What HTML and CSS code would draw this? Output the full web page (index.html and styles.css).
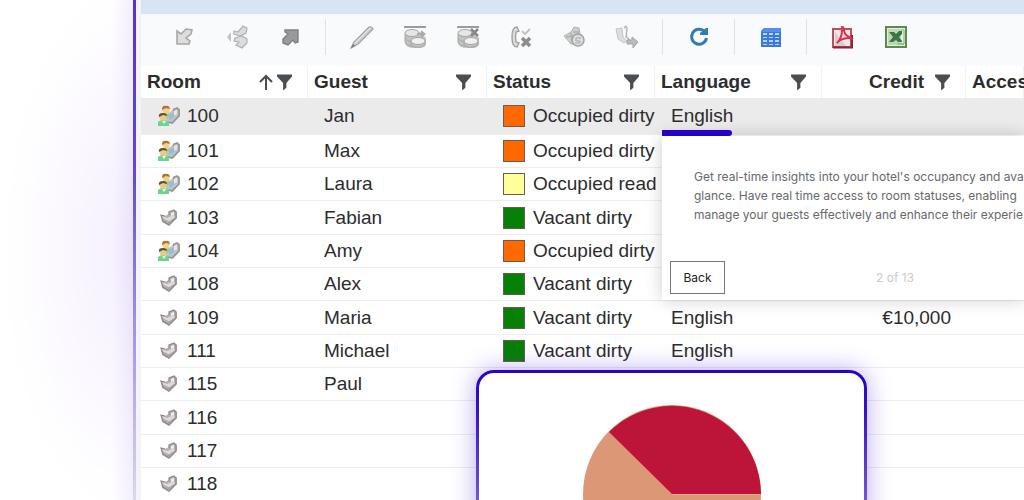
FILE: index.html
```html
<!DOCTYPE html>
<html lang="en">
<head>
<meta charset="utf-8">
<title>Rooms</title>
<link rel="stylesheet" href="styles.css">
</head>
<body>
<svg class="defs" width="0" height="0" aria-hidden="true">
  <defs>
    <symbol id="funnel" viewBox="0 0 16 17"><path d="M0 0H16V2L10 9V14L6.500 17V9L0 2Z" fill="#4a4e53"/></symbol>
    <symbol id="bed" viewBox="0 0 18 18">
      <path d="M1 6L5 7L9 5V3L14 1L17 3V9L9 17L2 13Z" fill="#b5b0b0"/>
      <path d="M2 7L7 9L14 6L15 9L9 13L3 11Z" fill="#dedada"/>
      <path d="M9 6V3L14 1L16 3V9L9 16L3 12L1 6L5 7" fill="none" stroke="#8d8787" stroke-width="1.200"/>
      <path d="M11 4L14 3V6L11 7Z" fill="#f3eeec"/>
      <path d="M3 10L9 13L15 9M9 13V16" fill="none" stroke="#a39d9d"/>
    </symbol>
    <symbol id="guests" viewBox="0 0 24 22">
      <path d="M9 9L15 6L17 4L20 2L23 4V11L16 19L9 17Z" fill="#b8c5cc"/>
      <path d="M16 6L17 4L20 3L22 5V11L15 18L11 17" fill="none" stroke="#9b8f8a" stroke-width="1.500"/>
      <path d="M11 10L18 7L19 10L13 15Z" fill="#9dbbcc"/>
      <path d="M17 6L20 5V9L17 11Z" fill="#efe5dd"/>
      <path d="M5 10Q8 6 12 10L10 13H5Z" fill="#7ed69b"/>
      <circle cx="9" cy="5" r="3.500" fill="#f5cf83"/><path d="M5 5Q5 0 9 1Q12 0 13 4L9 3Z" fill="#b27238"/>
      <path d="M1 21V17Q5 13 12 17V21Z" fill="#69d58e"/><path d="M5 16L7 19L9 16Z" fill="#fff"/>
      <circle cx="6" cy="12" r="3.500" fill="#f2c978"/><path d="M2 12Q1 8 6 8Q10 8 10 11L6 10Z" fill="#5d5040"/>
    </symbol>
    <symbol id="coins" viewBox="0 0 24 24">
      <path d="M1 1H23V3H1Z" fill="#9c9c9c"/>
      <path d="M2 8V18Q3 23 11 23H18Q23 22 23 18V13L17 7Z" fill="#c2c2c2"/>
      <ellipse cx="9" cy="8" rx="7" ry="3.500" fill="#e6e6e6" stroke="#a5a5a5"/>
      <path d="M2 9V17Q3 21 9 21M2 13Q4 17 9 16" fill="none" stroke="#a8a8a8"/>
      <ellipse cx="15" cy="16" rx="7" ry="3.500" fill="#f0f0f0" stroke="#a5a5a5"/>
      <path d="M8 17V20Q14 25 22 20V17" fill="none" stroke="#a5a5a5"/>
    </symbol>
  </defs>
</svg>
<main class="page">
  <section class="window">
    <div class="titlebar"></div>
    <div class="toolbar" role="toolbar" aria-label="Room actions">
      <button class="tool" aria-label="Check in"><svg width="18" height="18" viewBox="0 0 18 18"><path d="M2 3L6 6L11 1L17 2L16 6L11 10L15 13L14 16H2Z" fill="#ddd" stroke="#a8a8a8" stroke-width="1.600"/></svg></button>
      <button class="tool" aria-label="Move group"><svg width="24" height="24" viewBox="0 0 24 24"><path d="M6 7L2 12L6 17V14V7" fill="#c2c2c2"/><g fill="#dcdcdc" stroke="#b2b2b2" stroke-width="1.200"><path d="M9 6L13 7L18 1L22 3L21 8L15 11L9 9Z"/><path d="M10 13L17 11L22 14V18L17 23L11 20L14 17L9 16Z"/></g></svg></button>
      <button class="tool" aria-label="Check out"><svg width="18" height="18" viewBox="0 0 18 18"><path d="M4 2H17V14L14 15L12 12L7 17L2 15V11L7 6L4 4Z" fill="#9a9a9a" stroke="#808080" stroke-width="1.400"/></svg></button>
      <span class="sep"></span>
      <button class="tool" aria-label="Edit"><svg width="24" height="24" viewBox="0 0 24 24"><path d="M1 23L4 17L19 2Q22 1 23 4L8 19Z" fill="#cfcfcf" stroke="#a2a2a2" stroke-width="1.200"/><path d="M5 18L20 3" stroke="#eee"/><path d="M1 23L3 19L5 21Z" fill="#777"/></svg></button>
      <button class="tool" aria-label="Post charge"><svg width="24" height="24" viewBox="0 0 24 24"><use href="#coins"/><path d="M14 8H18V5L23 9L18 13V10H14Z" fill="#aaa"/></svg></button>
      <button class="tool" aria-label="Remove charge"><svg width="24" height="24" viewBox="0 0 24 24"><use href="#coins"/><path d="M15 4L22 11M22 4L15 11" stroke="#888" stroke-width="2.500"/></svg></button>
      <button class="tool" aria-label="Phone lock"><svg width="22" height="22" viewBox="0 0 22 22"><path d="M7 1Q2 1 2 11Q2 21 7 21L9 17L6 16Q5 11 6 6L9 5Z" fill="#ddd" stroke="#a2a2a2" stroke-width="1.400"/><path d="M12 5L15 8L20 3" fill="none" stroke="#c2c2c2" stroke-width="2"/><path d="M12 12L20 20M20 12L12 20" stroke="#8d8d8d" stroke-width="3.500"/></svg></button>
      <button class="tool" aria-label="Wake-up call"><svg width="24" height="24" viewBox="0 0 24 24"><path d="M2 11L9 7L12 2L17 3L18 9L16 18L9 19Z" fill="#cfcfcf" stroke="#b0b0b0"/><path d="M4 12L11 11M11 7L17 7M9 8L10 17" stroke="#b0b0b0" stroke-width="1.500"/><circle cx="16" cy="15" r="6" fill="#ddd" stroke="#a2a2a2" stroke-width="1.500"/><path d="M19 13H14V16H18V18H13" fill="none" stroke="#aaa"/></svg></button>
      <button class="tool" aria-label="Transfer call"><svg width="24" height="24" viewBox="0 0 24 24"><path d="M1 4L7 3L8 12L12 16L9 18L3 14Z" fill="#ddd" stroke="#c8c8c8"/><path d="M9 3Q12 -1 12 4L11 12L16 16" fill="#e8e8e8" stroke="#b2b2b2" stroke-width="1.300"/><path d="M12 15H17V12L23 17L18 23V19H12Z" fill="#bbb" stroke="#a5a5a5"/></svg></button>
      <span class="sep"></span>
      <button class="tool" aria-label="Refresh"><svg width="20" height="20" viewBox="0 0 20 20"><path d="M15 4A7.500 7.500 0 1 0 17.500 11" fill="none" stroke="#327dae" stroke-width="3"/><path d="M11 8V6L17 1H19V8Z" fill="#327dae"/></svg></button>
      <span class="sep"></span>
      <button class="tool" aria-label="Table layout"><svg width="20" height="19" viewBox="0 0 20 19"><path d="M3 0H20V19H0V3Z" fill="#3d79dc"/><path d="M0 4L4 0H20V4Z" fill="#568ef0"/><path d="M2 5H6V7H2ZM8 5H12V7H8ZM14 5H18V7H14ZM2 9H6V10H2ZM8 9H12V10H8ZM14 9H18V10H14ZM2 12H6V14H2ZM8 12H12V14H8ZM14 12H18V14H14ZM2 16H6V17H2ZM8 16H12V17H8ZM14 16H18V17H14Z" fill="#b7d5ff"/></svg></button>
      <span class="sep"></span>
      <button class="tool" aria-label="Export PDF"><svg width="23" height="23" viewBox="0 0 23 23"><path d="M2 3H20V21H2Z" fill="#f0e9e9" stroke="#b9505c" stroke-width="2"/><path d="M4 20V6L15 20Z" fill="#d5cfd0"/><path d="M2 21.500H21V9" fill="none" stroke="#8d2532" stroke-width="2"/><path d="M10 1Q13 0 13 5Q14 10 22 13Q18 11 12 13Q8 14 6 17Q11 12 11 4" fill="none" stroke="#e52d46" stroke-width="2"/></svg></button>
      <button class="tool" aria-label="Export Excel"><svg width="22" height="22" viewBox="0 0 22 22"><path d="M1 1H21V21H1Z" fill="#e5eee0" stroke="#5d8a4f" stroke-width="2"/><path d="M3 3H16V19H3Z" fill="#c0d6b6"/><path d="M4 6H9L11 8L14 5H17V8L14 11L17 15V16H13L11 14L8 16H4L8 11Z" fill="#397743"/><path d="M16 4H19V18H16M12 18H19" fill="none" stroke="#84aa78"/></svg></button>
    </div>
    <table class="rooms">
      <colgroup><col class="c-room"><col class="c-guest"><col class="c-status"><col class="c-lang"><col class="c-credit"><col></colgroup>
      <thead>
        <tr>
          <th scope="col"><div class="head"><span>Room</span><button class="icon-btn sort" aria-label="Sort by room"><svg width="14" height="17" viewBox="0 0 14 17"><path d="M7 16V2M1 8L7 2L13 8" fill="none" stroke="#4a4e53" stroke-width="2"/></svg></button><button class="icon-btn" aria-label="Filter room"><svg width="15" height="17"><use href="#funnel"/></svg></button></div></th>
          <th scope="col"><div class="head"><span>Guest</span><button class="icon-btn" aria-label="Filter guest"><svg width="15" height="17"><use href="#funnel"/></svg></button></div></th>
          <th scope="col"><div class="head"><span>Status</span><button class="icon-btn" aria-label="Filter status"><svg width="15" height="17"><use href="#funnel"/></svg></button></div></th>
          <th scope="col"><div class="head"><span>Language</span><button class="icon-btn" aria-label="Filter language"><svg width="15" height="17"><use href="#funnel"/></svg></button></div></th>
          <th scope="col"><div class="head head-end"><span>Credit</span><button class="icon-btn" aria-label="Filter credit"><svg width="15" height="17"><use href="#funnel"/></svg></button></div></th>
          <th scope="col"><div class="head"><span>Acces</span></div></th>
        </tr>
      </thead>
      <tbody>
        <tr class="selected"><td><div class="room"><svg width="24" height="22"><use href="#guests"/></svg>100</div></td><td>Jan</td><td><div class="status"><i class="dot orange"></i>Occupied dirty</div></td><td>English</td><td></td><td></td></tr>
        <tr><td><div class="room"><svg width="24" height="22"><use href="#guests"/></svg>101</div></td><td>Max</td><td><div class="status"><i class="dot orange"></i>Occupied dirty</div></td><td></td><td></td><td></td></tr>
        <tr><td><div class="room"><svg width="24" height="22"><use href="#guests"/></svg>102</div></td><td>Laura</td><td><div class="status"><i class="dot yellow"></i>Occupied read</div></td><td></td><td></td><td></td></tr>
        <tr><td><div class="room"><svg width="18" height="18"><use href="#bed"/></svg>103</div></td><td>Fabian</td><td><div class="status"><i class="dot green"></i>Vacant dirty</div></td><td></td><td></td><td></td></tr>
        <tr><td><div class="room"><svg width="24" height="22"><use href="#guests"/></svg>104</div></td><td>Amy</td><td><div class="status"><i class="dot orange"></i>Occupied dirty</div></td><td></td><td></td><td></td></tr>
        <tr><td><div class="room"><svg width="18" height="18"><use href="#bed"/></svg>108</div></td><td>Alex</td><td><div class="status"><i class="dot green"></i>Vacant dirty</div></td><td></td><td></td><td></td></tr>
        <tr><td><div class="room"><svg width="18" height="18"><use href="#bed"/></svg>109</div></td><td>Maria</td><td><div class="status"><i class="dot green"></i>Vacant dirty</div></td><td>English</td><td class="num">€10,000</td><td></td></tr>
        <tr><td><div class="room"><svg width="18" height="18"><use href="#bed"/></svg>111</div></td><td>Michael</td><td><div class="status"><i class="dot green"></i>Vacant dirty</div></td><td>English</td><td></td><td></td></tr>
        <tr><td><div class="room"><svg width="18" height="18"><use href="#bed"/></svg>115</div></td><td>Paul</td><td></td><td></td><td></td><td></td></tr>
        <tr><td><div class="room"><svg width="18" height="18"><use href="#bed"/></svg>116</div></td><td></td><td></td><td></td><td></td><td></td></tr>
        <tr><td><div class="room"><svg width="18" height="18"><use href="#bed"/></svg>117</div></td><td></td><td></td><td></td><td></td><td></td></tr>
        <tr><td><div class="room"><svg width="18" height="18"><use href="#bed"/></svg>118</div></td><td></td><td></td><td></td><td></td><td></td></tr>
      </tbody>
    </table>
  </section>

  <aside class="tour">
    <div class="progress"></div>
    <p class="tour-text">Get real-time insights into your hotel's occupancy and ava<br>glance. Have real time access to room statuses, enabling<br>manage your guests effectively and enhance their experie</p>
    <div class="tour-foot"><button class="back">Back</button><span class="step">2 of 13</span></div>
  </aside>

  <section class="chart">
    <div class="chart-body">
      <svg width="178" height="178" viewBox="0 0 178 178" role="img" aria-label="Pie chart">
        <circle cx="89" cy="89" r="89" fill="#dc9776"/>
        <path d="M89 89L26 27A89 89 0 0 1 178 89Z" fill="#bd153a"/>
        <path d="M89 89.500H178" stroke="#e5a692"/>
      </svg>
    </div>
  </section>
</main>
</body>
</html>
```
FILE: styles.css
```css
* { box-sizing: border-box; }
body {
  margin: 0;
  font-family: "Liberation Sans", Arial, sans-serif;
  font-size: 19px;
  color: #2c2c2e;
  background: #fff;
}
button { font: inherit; color: inherit; padding: 0; border: 0; background: none; }
svg { display: block; flex: none; }
.defs { position: absolute; }

.page {
  position: relative;
  height: 100vh;
  overflow: hidden;
  padding-left: 133px;
  background:
    linear-gradient(90deg, transparent 112px, rgba(120, 80, 230, .09) 134px, transparent 135px),
    radial-gradient(ellipse 130px 270px at 133px 250px, #f5effe, #fff);
}
.window {
  min-height: 100%;
  padding-left: 5px;
  border-left: 3px solid;
  border-image: linear-gradient(#5733c9, #6847d2 35%, #a590e8 65%, #dcd6f4) 1;
  background: #f4f3f8;
}

.titlebar { height: 14px; background: #d7e4f1; }
.toolbar {
  display: flex;
  align-items: center;
  height: 52px;
  padding: 0 16px 6px;
  background: #f9fafb;
}
.tool { flex: none; width: 53px; height: 36px; display: flex; align-items: center; justify-content: center; }
.sep { flex: none; width: 1px; height: 36px; margin: 0 9px; background: #e0e1e4; }

.rooms { width: 100%; table-layout: fixed; border-collapse: separate; border-spacing: 0; background: #fff; }
.c-room { width: 167px; }
.c-guest { width: 179px; }
.c-status { width: 168px; }
.c-lang { width: 167px; }
.c-credit { width: 144px; }
.rooms th { height: 32px; padding: 0; border-right: 1px solid #f2f2f4; text-align: left; }
.head { display: flex; align-items: center; padding: 0 15px 0 6px; gap: 4px; }
.head .icon-btn { margin-left: auto; }
.head .sort + .icon-btn { margin-left: 0; }
.head-end { justify-content: flex-end; gap: 11px; }
.head-end .icon-btn { margin-left: 0; }

.rooms td {
  height: 33px;
  padding: 0 0 0 16px;
  line-height: 24px;
  border-bottom: 1px solid #ededf0;
  white-space: nowrap;
}
.rooms tr:nth-child(3n+1) td { height: 34px; }
.rooms .selected:first-child td { height: 37px; background: #ebebeb; }
.rooms .num { padding: 0 15px 0 0; text-align: right; }
.room { display: grid; grid-template-columns: 24px auto; justify-content: start; align-items: center; justify-items: center; column-gap: 6px; }
.status { display: flex; align-items: center; gap: 8px; }
.dot { flex: none; width: 22px; height: 22px; border: 1px solid #6a5c50; }
.orange { background: #ff6900; }
.yellow { background: #ffff99; }
.green { background: #078007; }

.tour {
  position: absolute;
  left: 662px;
  right: 0;
  top: 136px;
  padding: 31px 0 6px;
  background: #fff;
  box-shadow: 0 0 16px rgba(0, 0, 0, .2);
  font-family: Inter, sans-serif;
}
.progress { position: absolute; left: 0; bottom: 100%; width: 70px; height: 6px; border-radius: 0 3px 3px 0; background: #2800c8; }
.tour-text { margin: 0 0 37px 32px; font-size: 12px; line-height: 19px; color: #68686b; white-space: nowrap; }
.tour-foot { display: flex; align-items: center; padding-left: 8px; }
.back { width: 55px; height: 33px; border: 1px solid #77777a; background: #fff; font-size: 12px; color: #222; }
.step { margin-left: 151px; font-size: 12px; color: #cacacd; }

.chart {
  position: absolute;
  left: 476px;
  top: 370px;
  width: 391px;
  padding: 3px 3px 0;
  border-radius: 18px 18px 0 0;
  background: linear-gradient(#2900c9, #3910c8 40px, #7355d3 130px);
  box-shadow: 0 0 24px rgba(85, 40, 230, .4);
}
.chart-body { display: flex; justify-content: center; padding: 32px 0; border-radius: 15px 15px 0 0; background: #fff; }
```
